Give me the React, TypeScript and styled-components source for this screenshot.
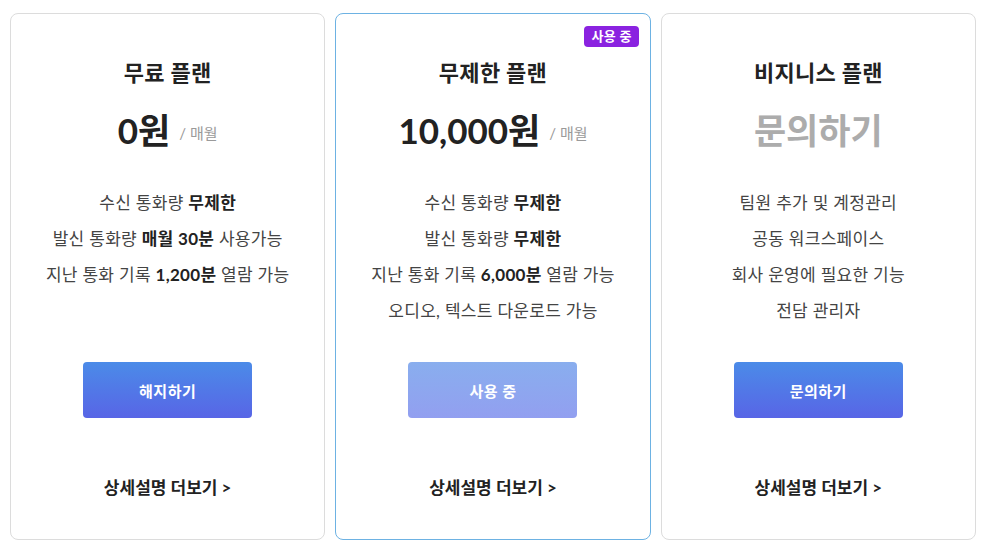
import React from "react";
import styled, { createGlobalStyle } from "styled-components";

type Plan = {
  name: string;
  price: string;
  period?: string;
  features: React.ReactNode[];
  action: string;
  active?: boolean;
};

const plans: Plan[] = [
  {
    name: "무료 플랜",
    price: "0원",
    period: "/ 매월",
    features: [
      <>수신 통화량 <b>무제한</b></>,
      <>발신 통화량 <b>매월 30분</b> 사용가능</>,
      <>지난 통화 기록 <b>1,200분</b> 열람 가능</>,
    ],
    action: "해지하기",
  },
  {
    name: "무제한 플랜",
    price: "10,000원",
    period: "/ 매월",
    features: [
      <>수신 통화량 <b>무제한</b></>,
      <>발신 통화량 <b>무제한</b></>,
      <>지난 통화 기록 <b>6,000분</b> 열람 가능</>,
      <>오디오, 텍스트 다운로드 가능</>,
    ],
    action: "사용 중",
    active: true,
  },
  {
    name: "비지니스 플랜",
    price: "문의하기",
    features: ["팀원 추가 및 계정관리", "공동 워크스페이스", "회사 운영에 필요한 기능", "전담 관리자"],
    action: "문의하기",
  },
];

const App = () => (
  <>
    <GlobalStyle />
    <Page>
      {plans.map((p) => (
        <Card key={p.name} $active={p.active}>
          {p.active && <Badge>사용 중</Badge>}
          <Title>{p.name}</Title>
          <PriceRow>
            <Price $muted={!p.period}>{p.price}</Price>
            {p.period && <Period>{p.period}</Period>}
          </PriceRow>
          <Features>
            {p.features.map((f, i) => (
              <li key={i}>{f}</li>
            ))}
          </Features>
          <ActionButton $disabled={p.active}>{p.action}</ActionButton>
          <MoreLink>상세설명 더보기 &gt;</MoreLink>
        </Card>
      ))}
    </Page>
  </>
);

const GlobalStyle = createGlobalStyle`
  body {
    margin: 0;
    background: #fff;
    font-family: "Lato", "Noto Sans CJK KR", sans-serif;
    color: #222;
  }
`;

const Page = styled.div`
  display: grid;
  grid-template-columns: repeat(3, 1fr);
  gap: 10px;
  padding: 13px 11px 10px 10px;
`;

const Card = styled.div<{ $active?: boolean }>`
  position: relative;
  height: 527px;
  box-sizing: border-box;
  display: flex;
  flex-direction: column;
  align-items: center;
  padding: 44px 0 40px;
  border: 1px solid ${(p) => (p.$active ? "#6db2e3" : "#dcdcdc")};
  border-radius: 8px;
  background: #fff;
`;

const Badge = styled.span`
  position: absolute;
  top: 12px;
  right: 11px;
  padding: 0 7px;
  height: 21px;
  line-height: 21px;
  border-radius: 4px;
  background: #8a22e0;
  color: #fff;
  font-size: 13px;
  font-weight: 700;
  letter-spacing: 0.3px;
`;

const Title = styled.h3`
  margin: 0;
  font-size: 22px;
  line-height: 30px;
  font-weight: 700;
  color: #222;
  letter-spacing: 0.3px;
`;

const PriceRow = styled.div`
  display: flex;
  align-items: center;
  margin-top: 20px;
  height: 44px;
`;

const Price = styled.span<{ $muted?: boolean }>`
  font-size: 35px;
  line-height: 44px;
  font-weight: 700;
  color: ${(p) => (p.$muted ? "#acacac" : "#222")};
`;

const Period = styled.span`
  margin: 6px 0 0 9px;
  font-size: 15px;
  line-height: 20px;
  color: #9a9a9a;
`;

const Features = styled.ul`
  flex: 1;
  list-style: none;
  margin: 33px 0 0;
  padding: 0;
  text-align: center;

  li {
    font-size: 17px;
    line-height: 36px;
    color: #444;
    letter-spacing: 0.3px;
  }
  b {
    color: #222;
    font-weight: 700;
  }
`;

const ActionButton = styled.button<{ $disabled?: boolean }>`
  width: 169px;
  height: 56px;
  border: 0;
  border-radius: 4px;
  font-family: inherit;
  font-size: 15px;
  font-weight: 700;
  letter-spacing: 0.5px;
  color: #fff;
  cursor: pointer;
  background: ${(p) =>
    p.$disabled
      ? "linear-gradient(180deg, #89aeee 0%, #929ff0 100%)"
      : "linear-gradient(180deg, #4b8be8 0%, #5865e6 100%)"};
`;

const MoreLink = styled.a`
  margin-top: 59px;
  font-size: 17px;
  line-height: 22px;
  font-weight: 700;
  color: #222;
  cursor: pointer;
`;

export default App;
